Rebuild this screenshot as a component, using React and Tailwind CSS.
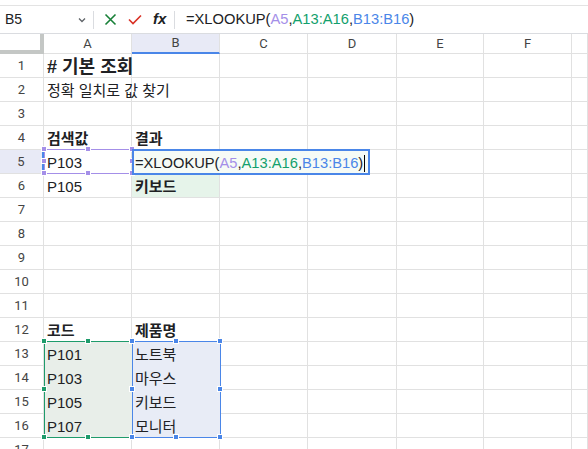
import React from 'react';

const COLS = ['A', 'B', 'C', 'D', 'E', 'F', ''];
const WIDTHS = ['w-[88px]', 'w-[88px]', 'w-[88px]', 'w-[89px]', 'w-[87px]', 'w-[88px]', 'flex-1'];

const CELLS = {
  1: { A: { text: '# 기본 조회', cls: 'font-bold text-[18px]' } },
  2: { A: { text: '정확 일치로 값 찾기' } },
  4: { A: { text: '검색값', cls: 'font-bold' }, B: { text: '결과', cls: 'font-bold' } },
  5: { A: { text: 'P103' } },
  6: { A: { text: 'P105' }, B: { text: '키보드', cls: 'font-bold', bg: 'bg-[#e6f4ea]' } },
  12: { A: { text: '코드', cls: 'font-bold' }, B: { text: '제품명', cls: 'font-bold' } },
  13: { A: { text: 'P101' }, B: { text: '노트북' } },
  14: { A: { text: 'P103' }, B: { text: '마우스' } },
  15: { A: { text: 'P105' }, B: { text: '키보드' } },
  16: { A: { text: 'P107' }, B: { text: '모니터' } },
};

const cellFont = { fontFamily: '"Liberation Sans", "Noto Sans CJK KR", Arial, sans-serif' };

const Handle = ({ x, y, color }) => (
  <div
    className={`absolute w-[6px] h-[6px] border border-white ${color}`}
    style={{ left: x - 3, top: y - 3 }}
  />
);

const Range = ({ x, y, w, h, border, fill, handle }) => (
  <>
    <div
      className={`absolute border ${border} ${fill || ''}`}
      style={{ left: x, top: y, width: w + 1, height: h + 1 }}
    />
    {[
      [x, y], [x + w / 2, y], [x + w, y],
      [x, y + h / 2], [x + w, y + h / 2],
      [x, y + h], [x + w / 2, y + h], [x + w, y + h],
    ].map(([hx, hy], i) => (
      <Handle key={i} x={hx} y={hy} color={handle} />
    ))}
  </>
);

const Formula = () => (
  <>
    =XLOOKUP(<span className="text-[#a48fe8]">A5</span>,<span className="text-[#12a06c]">A13:A16</span>,<span className="text-[#4a86e8]">B13:B16</span>)
  </>
);

export default function App() {
  const rows = Array.from({ length: 17 }, (_, i) => i + 1);

  return (
    <div className="w-[588px] h-[449px] overflow-hidden bg-white relative text-[#202124]" style={cellFont}>
      {/* top strip */}
      <div className="h-[6px] border-b border-[#e3e3e3]" />

      {/* formula bar */}
      <div className="h-[28px] flex items-center border-b border-[#dadce0] text-[14.7px]">
        <div className="w-[93px] pl-[5px] pr-[6px] flex items-center justify-between text-[14px]">
          <span>B5</span>
          <svg width="10" height="10" viewBox="0 0 10 10" className="text-[#5f6368]">
            <path d="M2 3.5 L5 6.5 L8 3.5" fill="none" stroke="currentColor" strokeWidth="1.3" />
          </svg>
        </div>
        <div className="w-px h-[18px] bg-[#dadce0]" />
        <div className="flex items-center gap-[11px] pl-[10px] pr-[7px]">
          <svg width="13" height="13" viewBox="0 0 13 13">
            <path d="M1.5 1.5 L11.5 11.5 M11.5 1.5 L1.5 11.5" stroke="#188038" strokeWidth="1.6" />
          </svg>
          <svg width="14" height="12" viewBox="0 0 14 12">
            <path d="M1 5.5 L5 9.5 L13 1.5" fill="none" stroke="#d93025" strokeWidth="1.6" />
          </svg>
          <span className="italic font-bold text-[15px] w-[14px]" style={{ fontFamily: '"Liberation Sans", sans-serif' }}>
            fx
          </span>
        </div>
        <div className="w-px h-[18px] bg-[#dadce0]" />
        <div className="pl-[11px] whitespace-nowrap">
          <Formula />
        </div>
      </div>

      {/* column header */}
      <div className="flex h-[20px] text-[13px] text-[#444]" style={{ fontFamily: 'Roboto, sans-serif' }}>
        <div className="w-[44px] border-r-[4px] border-b-[4px] border-[#c4c7c5] bg-white" />
        {COLS.map((c, i) => (
          <div
            key={i}
            className={`${WIDTHS[i]} flex items-center justify-center border-r border-[#e1e1e1] ${
              c === 'B' ? 'bg-[#e8eaf6] border-b-2 border-b-[#4a86e8]' : 'border-b border-b-[#e1e1e1]'
            }`}
          >
            {c}
          </div>
        ))}
      </div>

      {/* rows */}
      {rows.map((r) => (
        <div key={r} className="flex h-[24px]">
          <div
            className={`w-[44px] flex items-center justify-center text-[13px] text-[#444] border-b border-[#e1e1e1] ${
              r === 5 ? 'bg-[#e8eaf6] border-r-2 border-r-[#4a86e8]' : 'border-r border-r-[#e1e1e1]'
            }`}
            style={{ fontFamily: 'Roboto, sans-serif' }}
          >
            {r}
          </div>
          {COLS.map((c, i) => {
            const cell = (CELLS[r] || {})[c];
            return (
              <div
                key={i}
                className={`${WIDTHS[i]} border-r border-b border-[#e1e1e1] flex items-center pl-[3px] pt-[3px] text-[15px] whitespace-nowrap overflow-visible ${
                  cell && cell.bg ? cell.bg : ''
                }`}
              >
                {cell && <span className={`relative z-10 ${cell.cls || ''}`}>{cell.text}</span>}
              </div>
            );
          })}
        </div>
      ))}

      {/* A13:A16 green range */}
      <Range x={44} y={341} w={88} h={96} border="border-[#1e9b6b]" fill="bg-[#e8eee9]" handle="bg-[#1e9b6b]" />
      {/* B13:B16 blue range */}
      <Range x={132} y={341} w={88} h={96} border="border-[#4a86e8]" fill="bg-[#e8ecf6]" handle="bg-[#4a86e8]" />
      {/* A5 purple reference */}
      <Range x={44} y={149} w={88} h={24} border="border-[#a48fe8]" handle="bg-[#a48fe8]" />

      {/* B5 editor */}
      <div className="absolute left-[132px] top-[149px] w-[238px] h-[26px] border-2 border-[#4a86e8] bg-[#f6fbf6] flex items-center pl-[1px] pt-[2px] text-[14.7px] whitespace-nowrap z-20">
        <Formula />
        <span className="inline-block w-px h-[17px] bg-black ml-[1px]" />
      </div>
    </div>
  );
}
